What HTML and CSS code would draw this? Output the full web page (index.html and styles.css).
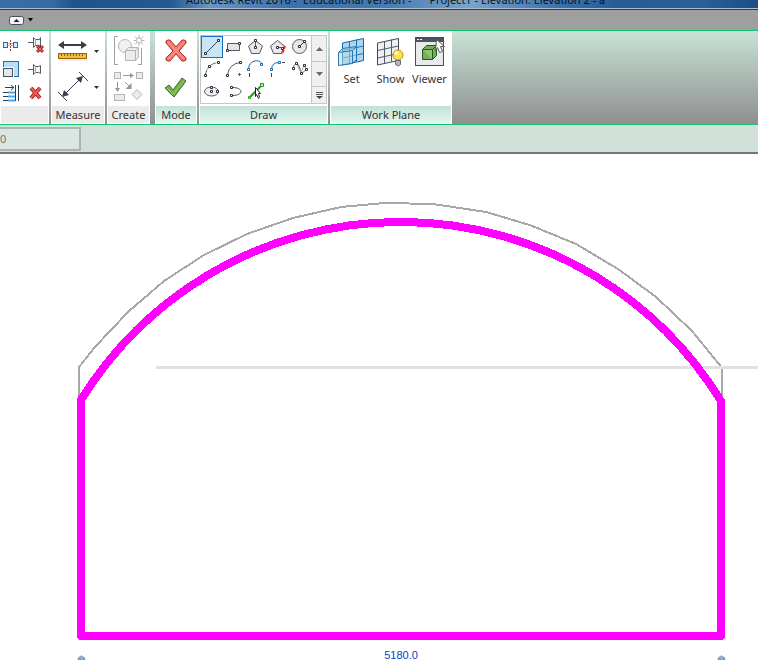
FILE: index.html
```html
<!DOCTYPE html>
<html lang="en">
<head>
<meta charset="utf-8">
<title>Autodesk Revit 2016</title>
<link rel="stylesheet" href="styles.css">
</head>
<body>
<header class="titlebar">
  <span>Autodesk Revit 2016 -</span><span>Educational Version -</span><span class="project">Project1 - Elevation: Elevation 2 - a</span>
</header>

<nav class="tabbar">
  <button class="collapse" aria-label="Minimize ribbon"><svg width="15" height="9"><rect x=".5" y=".5" width="14" height="8" rx="2" fill="#f4f5f8" stroke="#4b4f5c"/><path d="M4.500 6h6l-3-3z" fill="#222"/></svg></button>
  <button aria-label="Ribbon options"><svg width="5" height="4"><path d="M0 0h5L2.500 3.500z" fill="#000"/></svg></button>
</nav>

<main class="ribbon">
  <section class="panel modify" aria-label="Modify">
    <div class="body tools">
      <button aria-label="Mirror"><svg width="16" height="16"><g fill="#d8ecf8" stroke="#226fae"><rect x="1.500" y="5.500" width="4" height="5"/><rect x="11.500" y="5.500" width="4" height="5"/></g><path d="M8.500 3v11" stroke="#b83a2c" stroke-dasharray="2 1"/><path d="M7 6v4M10 6v4" stroke="#d65746" stroke-dasharray="1 1"/></svg></button>
      <button aria-label="Unpin"><svg width="16" height="16"><path d="M0 5.500h5" stroke="#555c66"/><path d="M5.500.5l2 2h4l1-2v10l-1-2h-4l-2 2z" fill="#f4f4f4" stroke="#555c66"/><path d="M7.500 3v5" stroke="#aaa"/><path d="m9 9 6 6m0-6-6 6" stroke="#a32020" stroke-width="3"/><path d="m9 9 6 6m0-6-6 6" stroke="#f0756c"/></svg></button>
      <button aria-label="Scale"><svg width="18" height="16"><rect x="1.500" y=".5" width="15" height="15" fill="#b9dff6" stroke="#2a6ca5"/><rect x="1" y="6" width="11" height="10" fill="#fff"/><rect x="1.500" y="7.500" width="9" height="8" fill="#e3e6ea" stroke="#47505d"/></svg></button>
      <button aria-label="Pin"><svg width="16" height="16"><path d="M0 8.500h5" stroke="#555c66"/><path d="M5.500 3.500l2 2h3l2-1v8l-2-1h-3l-2 2z" fill="#f4f4f4" stroke="#555c66"/><path d="M7.500 6v5" stroke="#aaa"/></svg></button>
      <button aria-label="Align"><svg width="18" height="16"><path d="M3 2.500h9M9 0l3 2.500L9 5" fill="none" stroke="#333b48"/><path d="M1 7.500h12M1 11.500h12M1 15.500h12" stroke="#333b48"/><path d="M6 7.500h7M6 11.500h7M6 15.500h7" stroke="#4aa7f0" stroke-width="2"/><path d="M13.500 0v16M16.500 0v16" stroke="#333b48"/></svg></button>
      <button aria-label="Delete"><svg width="16" height="16"><path d="m3 3 9 10m0-10L3 13" stroke="#9c2020" stroke-width="4"/><path d="m3 3 9 10m0-10L3 13" stroke="#f05b51" stroke-width="2"/></svg></button>
    </div>
    <h2>&nbsp;</h2>
  </section>

  <section class="panel measure">
    <div class="body stack">
      <button class="drop" aria-label="Measure"><svg width="32" height="32"><path d="M4 10h23" stroke="#3a404b" stroke-width="2"/><path d="m1 10 6-4v8zM30 10l-6-4v8z" fill="#3a404b"/><rect x="1.500" y="18.500" width="28" height="5" fill="#f4bd3b" stroke="#9b6208"/><path d="M4.500 19v2M7.500 19v2M10.500 19v2M13.500 19v2M16.500 19v2M19.500 19v2M22.500 19v2M25.500 19v2" stroke="#8b5b11"/><path d="M2 25h28" stroke="#ddd"/></svg><svg class="caret" width="5" height="3"><path d="M0 0h5L2.500 3z" fill="#333"/></svg></button>
      <button class="drop" aria-label="Aligned dimension"><svg width="32" height="32"><path d="m7 24 17-17" stroke="#3a404b"/><path d="m5 26 2-7 5 5zM26 5l-7 2 5 5z" fill="#3a404b"/><path d="m1 21 9 9M22 1l9 9" stroke="#3a404b"/></svg><svg class="caret" width="5" height="3"><path d="M0 0h5L2.500 3z" fill="#333"/></svg></button>
    </div>
    <h2>Measure</h2>
  </section>

  <section class="panel create">
    <div class="body stack">
      <button aria-label="Create group" disabled><svg width="32" height="32"><g fill="none" stroke="#b4b4b4"><path d="M5 1.500H1.500v28H5M25 29.500h3.500V13" stroke="#a0a0a0"/><circle cx="12" cy="11" r="6.500" fill="#f1f1f1"/><path d="m12.500 15.500 3-3h10v10l-3 3h-10z" fill="#ececec"/><path d="M12.500 15.500h10v10M22.500 15.500l3-3"/><path d="M26 0v11M20.500 5.500h11M22 1.500l8 8M30 1.500l-8 8"/><circle cx="26" cy="5.500" r="2.500" fill="#fff"/></g></svg></button>
      <button aria-label="Create similar" disabled><svg width="32" height="32"><g fill="#ebebeb" stroke="#b4b4b4"><rect x="1.500" y="1.500" width="6" height="6"/><rect x="23.500" y="1.500" width="6" height="6"/><rect x="1.500" y="23.500" width="10" height="6"/><path d="m24 18.500 5 5-5 5-5-5z"/></g><path d="M10 4.500h10M4.500 11v7M12 11l5 5" stroke="#979797"/><path d="M17 2v5l4-2.500zM2 17h5l-2.500 4zM18.500 12v6h-6z" fill="#979797"/></svg></button>
    </div>
    <h2>Create</h2>
  </section>

  <section class="panel contextual mode">
    <div class="body stack">
      <button aria-label="Cancel edit mode"><svg width="32" height="32"><path d="m6 6 2-1h2l6 7 6-7h2l2 1v2l-7 8 7 7v2l-2 1h-2l-6-7-6 7H8l-2-1v-2l7-7-7-8z" fill="#f47c70" stroke="#a52b23"/><path d="m8 7 16 17M24 7 8 24" stroke="#ff9a8e"/></svg></button>
      <button aria-label="Finish edit mode"><svg width="32" height="32"><path d="m5 17 4-3 4 5 9-12 4 3-12 16z" fill="#74b14b" stroke="#3b6c27"/><path d="m7 17 6 6L24 10" fill="none" stroke="#9acb78"/></svg></button>
    </div>
    <h2>Mode</h2>
  </section>

  <section class="panel contextual draw">
    <div class="body">
      <div class="gallery">
        <div class="shapes">
          <button class="selected" aria-label="Line"><svg width="20" height="20"><path d="M3.500 16.500 16.500 3.500" stroke="#3d434e"/><path class="node" d="M2.500 15.500h2v2h-2zM15.500 2.500h2v2h-2z"/></svg></button>
          <button aria-label="Rectangle"><svg width="20" height="20"><path d="M3.500 6.500h12v7h-12z" fill="#e4e5e8" stroke="#555b65"/><path class="node" d="M2.500 12.500h2v2h-2zM14.500 5.500h2v2h-2z"/></svg></button>
          <button aria-label="Inscribed polygon"><svg width="20" height="20"><path d="m9.500 3.500 7 5.500-3 7.500h-8L2.500 9zM9.500 3v7" fill="#e8e8ea" stroke="#555b65"/><path class="node" d="M8.500 2.500h2v2h-2zM8.500 9.500h2v2h-2z"/></svg></button>
          <button aria-label="Circumscribed polygon"><svg width="20" height="20"><path d="m9.500 3.500 7 5.500-3 7.500h-8L2.500 9zM9.500 10.500h4" fill="#e8e8ea" stroke="#555b65"/><path d="m17 9-3 8" stroke="#e22" stroke-width="2" stroke-dasharray="3 1"/><path class="node" d="M8.500 9.500h2v2h-2zM13.500 10.500h2v2h-2z"/></svg></button>
          <button aria-label="Circle"><svg width="20" height="20"><circle cx="9.500" cy="9.500" r="7" fill="#e8e8ea" stroke="#555b65"/><path d="m10 9 5-5" stroke="#333"/><path class="node" d="M8.500 8.500h2v2h-2zM13.500 3.500h2v2h-2z"/></svg></button>
          <button aria-label="Start-end-radius arc"><svg width="20" height="20"><path d="M3.500 16Q5 5 16 3.500" fill="none" stroke="#555b65" stroke-dasharray="5 1"/><path class="node" d="M2.500 15.500h2v2h-2zM6.500 6.500h2v2h-2zM15.500 2.500h2v2h-2z"/></svg></button>
          <button aria-label="Center-ends arc"><svg width="20" height="20"><path d="M3.500 16Q5 5 16 3.500M14 15.500h3M15.500 14v3" fill="none" stroke="#555b65"/><path class="node" d="M2.500 15.500h2v2h-2zM15.500 2.500h2v2h-2z"/></svg></button>
          <button aria-label="Tangent end arc"><svg width="20" height="20"><path d="M2.500 10C3 0 15 0 15.500 5" fill="none" stroke="#1269b4"/><path d="M3.500 14v4" stroke="#444"/><path class="node blue" d="M1.500 9.500h2v2h-2zM14.500 4.500h2v2h-2z"/></svg></button>
          <button aria-label="Fillet arc"><svg width="20" height="20"><path d="M3.500 11Q3.500 3.500 11 3.500" fill="none" stroke="#1269b4"/><path d="M3.500 14v4M14 3.500h3" stroke="#444"/><path class="node blue" d="M2.500 9.500h2v2h-2zM10.500 2.500h2v2h-2z"/></svg></button>
          <button aria-label="Spline"><svg width="20" height="20"><path d="M3 9C5 3 8 3 10 10c2 8 4 1 7 0" fill="none" stroke="#555b65"/><path d="m3 9 3-5 5 10 3-8 2 4" fill="none" stroke="#aaa"/><path class="node" d="M2.500 8.500h2v2h-2zM5.500 3.500h2v2h-2zM10.500 13.500h2v2h-2zM13.500 5.500h2v2h-2zM15.500 9.500h2v2h-2z"/></svg></button>
          <button aria-label="Ellipse"><svg width="20" height="20"><ellipse cx="9.500" cy="10.500" rx="7" ry="4.500" fill="#eee" stroke="#555b65"/><path class="node" d="M8.500 5.500h2v2h-2zM8.500 9.500h2v2h-2zM14.500 9.500h2v2h-2z"/></svg></button>
          <button aria-label="Partial ellipse"><svg width="20" height="20"><path d="M8 6.500c12 0 12 8 0 8" fill="none" stroke="#444b57"/><path class="node" d="M6.500 5.500h2v2h-2zM6.500 13.500h2v2h-2z"/></svg></button>
          <button aria-label="Pick lines"><svg width="20" height="20"><path d="M4 16 16 4" stroke="#269c25" stroke-width="2"/><path d="M2.500 15.500h2v2h-2zM14.500 2.500h3v3h-3z" fill="#baf0ad" stroke="#1aa514"/><path d="m9.500 6.500 5 6h-2l1 4-1 1-2-4-1 2z" fill="#fff" stroke="#222"/></svg></button>
        </div>
        <div class="scroller">
          <button aria-label="Scroll up"><svg width="7" height="4"><path d="M0 4h7L3.500 0z" fill="#6b6b6b"/></svg></button>
          <button aria-label="Scroll down"><svg width="7" height="4"><path d="M0 0h7L3.500 4z" fill="#6b6b6b"/></svg></button>
          <button aria-label="More shapes"><svg width="7" height="7"><path d="M0 .5h7M0 2.500h7" stroke="#555"/><path d="M0 4h7L3.500 7z" fill="#444"/></svg></button>
        </div>
      </div>
    </div>
    <h2>Draw</h2>
  </section>

  <section class="panel contextual plane">
    <div class="body large">
      <button><svg width="32" height="32"><path d="m6.500 6 21-4.500v22L6.500 28z" fill="#a9d7f3" stroke="#1865a7"/><path d="M13.500 4.500v22m7-24v22M6.500 13.500l21-4.500M6.500 21l21-4.500" stroke="#2373b4"/><path d="m2.500 15.500 4-4 14-2v13l-4 4-14 2zM2.500 15.500l14-2v13M16.500 13.500l4-4" fill="#b9d9eb88" stroke="#2878ad"/></svg><span>Set</span></button>
      <button><svg width="32" height="32"><path d="m2.500 6 21-4.500v22L2.500 28z" fill="#edeff3" stroke="#454a57"/><path d="M9.500 4.500v22m7-24v22M2.500 13.500l21-4.500M2.500 21l21-4.500" stroke="#535966"/><circle cx="23" cy="18" r="5" fill="#ffe04d" stroke="#cc8c15"/><circle cx="21.500" cy="16" r="2" fill="#fff8ba"/><path d="M20.500 23.500h5v4l-2 1.500-3-1.500z" fill="#b4b8bf" stroke="#666b75"/></svg><span>Show</span></button>
      <button><svg width="32" height="32"><rect x="1.500" y=".5" width="28" height="28" fill="#e9eaec" stroke="#4a4d59"/><path d="M2 3h27" stroke="#50525f" stroke-width="4"/><path d="M3 2.500h2M6 2.500h2" stroke="#fff"/><path d="m8.500 12.500 4-4h10v10l-4 4h-10z" fill="#75ad57" stroke="#205a1d"/><path d="M8.500 12.500h10v10M18.500 12.500l4-4" fill="#91c374" stroke="#205a1d"/><path d="m22.500 2.500 8 7h-4l2 5-3 1-2-5-2 3z" fill="#fff" stroke="#555"/></svg><span>Viewer</span></button>
    </div>
    <h2>Work Plane</h2>
  </section>
</main>

<div class="options"><input type="text" value="0" aria-label="Offset" disabled></div>

<svg class="canvas" viewBox="0 154 758 506" role="img" aria-label="Elevation sketch">
  <path d="M79 400V367L95 347l33-35 36-31 40-26 43-21 46-16 48-11 44-4 48 1 53 8 45 13.500 45 18.500 42 25 38 28 36 34 28.500 35M722 369v31" fill="none" stroke="#a8a8a8" stroke-width="2" shape-rendering="crispEdges"/>
  <path d="M156 367.500h602" stroke="#e1e1e1" stroke-width="3"/>
  <path d="M81 400A376 376 0 0 1 721 401V636H81Z" fill="none" stroke="#f0f" stroke-width="8" stroke-linejoin="round" shape-rendering="crispEdges"/>
  <text x="401" y="659" text-anchor="middle">5180.0</text>
  <path d="M78 660a3.500 3.500 0 0 1 7 0zM718 660a3.500 3.500 0 0 1 7 0z" fill="#8eb4f0" stroke="#7b8799"/>
  <path d="M81.500 655v3M721.500 655v3" stroke="#92b4ee"/>
</svg>
</body>
</html>
```

FILE: styles.css
```css
* { box-sizing: border-box; }

body {
  margin: 0;
  background: #fff;
  color: #333;
  font: 11px/16px "Noto Sans", "Open Sans", sans-serif;
  overflow: hidden;
}

button {
  display: flex;
  align-items: center;
  justify-content: center;
  padding: 0;
  border: 0;
  background: none;
  color: inherit;
  font: inherit;
}

svg {
  display: block;
  flex: none;
  overflow: visible;
}

.titlebar {
  display: flex;
  align-items: flex-end;
  gap: 6px;
  height: 10px;
  padding-left: 186px;
  overflow: hidden;
  border-bottom: 1px solid #243c5e;
  background: linear-gradient(90deg, #3a6ca6 0, #386aa4 50px, #20528a 75px, #245991 170px, #6b94be 210px, #3e71a9 290px, #4478af 380px, #7ba2c9 470px, #3c70a9 560px, #265b94 620px, #2a5f98 700px, #1c4e86 100%);
  box-shadow: inset 0 -1px #a9bfd8;
  color: #0a1420;
  white-space: nowrap;
  line-height: 18px;
}

.titlebar .project { margin-left: 12px; }

.tabbar {
  display: flex;
  align-items: center;
  gap: 4px;
  height: 20px;
  padding-left: 9px;
  background: #9f9f9f;
}

.ribbon {
  display: flex;
  gap: 2px;
  height: 95px;
  border-top: 1px solid #0fc26c;
  border-bottom: 1px solid #0fc26c;
  background: linear-gradient(#c8e2d6, #8f8f8f);
}

.panel {
  display: flex;
  flex-direction: column;
  flex: none;
  padding: 0 1px 1px;
  background: #fff;
}

.panel h2 {
  margin: 0;
  height: 17px;
  background: #ebebeb;
  font-size: 11px;
  font-weight: 400;
  line-height: 17px;
  text-align: center;
  white-space: nowrap;
}

.contextual h2 { background: linear-gradient(#c4e0d5, #e0f8f0); }

.body { height: 75px; }

.modify { width: 49px; }
.measure { width: 54px; }
.create { width: 43px; }
.mode { width: 42px; margin-left: 3px; }
.draw { width: 129px; }
.plane { width: 122px; }

.tools {
  display: grid;
  grid-template-columns: 16px 16px;
  grid-auto-rows: 16px;
  gap: 8px 10px;
  padding: 6px 0 0 1px;
}

.tools button { justify-content: flex-start; }

.stack {
  display: flex;
  flex-direction: column;
  align-items: center;
  gap: 4px;
  padding-top: 4px;
}

.drop { gap: 5px; }

.gallery {
  display: flex;
  height: 69px;
  margin-top: 4px;
  border: 1px solid #c6c6c6;
}

.shapes {
  display: grid;
  grid-template-columns: repeat(5, 22px);
  grid-auto-rows: 22px;
  flex: 1;
}

.shapes .selected {
  background: #c9e5f8;
  box-shadow: inset 0 0 0 1px #1a6fc0;
}

.node {
  fill: #fff;
  stroke: #2c323d;
}

.node.blue { stroke: #1269b4; }

.scroller {
  display: grid;
  grid-template-rows: 25px 25px 17px;
  width: 15px;
  border-left: 1px solid #c6c6c6;
  background: #f0f0f0;
}

.scroller button + button { border-top: 1px solid #c6c6c6; }

.large {
  display: grid;
  grid-template-columns: repeat(3, 39px);
  align-items: start;
  padding: 6px 0 0 1px;
}

.large button {
  flex-direction: column;
  gap: 2px;
}

.options {
  display: flex;
  align-items: center;
  height: 29px;
  border-bottom: 2px solid #777;
  background: #d1e1da;
}

.options input {
  width: 81px;
  height: 24px;
  padding: 0;
  border: 2px solid #aeb3b1;
  border-left: 0;
  background: #dae6e1;
  color: #777;
  font: inherit;
}

.canvas {
  width: 100%;
  height: auto;
}

.canvas text {
  fill: #0b3fc0;
  font: 11px "Liberation Sans", Arial, sans-serif;
}
```
